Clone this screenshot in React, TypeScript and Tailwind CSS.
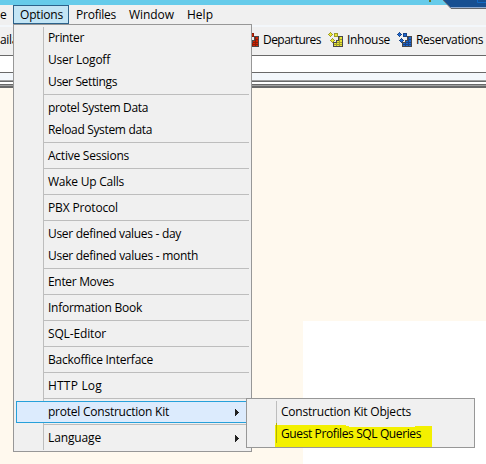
import { useLayoutEffect, useRef } from 'react';

type LabelProps = { text: string; width: number };

// Tightens or loosens the tracking so that a label takes its set width.
function Label({ text, width }: LabelProps) {
  const ref = useRef<HTMLSpanElement>(null);
  useLayoutEffect(() => {
    const el = ref.current;
    if (!el) return;
    el.style.letterSpacing = '0px';
    const natural = el.getBoundingClientRect().width;
    el.style.letterSpacing = `${(width + 1 - natural) / text.length}px`;
  }, [text, width]);
  return (
    <span ref={ref} className="inline-block whitespace-pre">
      {text}
    </span>
  );
}

type Entry = { text: string; width: number; sub?: boolean; active?: boolean };

const groups: Entry[][] = [
  [
    { text: 'Printer', width: 35 },
    { text: 'User Logoff', width: 61 },
    { text: 'User Settings', width: 68 },
  ],
  [
    { text: 'protel System Data', width: 99 },
    { text: 'Reload System data', width: 103 },
  ],
  [{ text: 'Active Sessions', width: 80 }],
  [{ text: 'Wake Up Calls', width: 75 }],
  [{ text: 'PBX Protocol', width: 69 }],
  [
    { text: 'User defined values - day', width: 132 },
    { text: 'User defined values - month', width: 149 },
  ],
  [{ text: 'Enter Moves', width: 65 }],
  [{ text: 'Information Book', width: 93 }],
  [{ text: 'SQL-Editor', width: 57 }],
  [{ text: 'Backoffice Interface', width: 104 }],
  [{ text: 'HTTP Log', width: 53 }],
  [{ text: 'protel Construction Kit', width: 120, sub: true, active: true }],
  [{ text: 'Language', width: 52, sub: true }],
];

function Row({ item }: { item: Entry }) {
  return (
    <div
      className={
        'relative mx-[2px] flex h-[22px] items-center justify-between border pl-[31px] pr-[9px] ' +
        (item.active ? 'border-[#26a0da] bg-[#dcebfd]' : 'border-transparent')
      }
    >
      <Label text={item.text} width={item.width} />
      {item.sub && (
        <svg width="4" height="7" viewBox="0 0 4 7" shapeRendering="crispEdges">
          <path d="M0 0h1v1h1v1h1v1h1v1h-1v1h-1v1h-1v1h-1z" fill="#212121" />
        </svg>
      )}
    </div>
  );
}

function Blocks({ color, shade }: { color: string; shade: string }) {
  return (
    <svg width="15" height="15" viewBox="0 0 15 15" shapeRendering="crispEdges" className="mt-[-1px] shrink-0">
      <path d="M2 0h1v1h1v1h1v1h-1v1h-1v1h-1v-1h-1v-1h-1v-1h1v-1h1zM4 6h1v1h1v1h1v1h-1v1h-1v1h-1v-1h-1v-1h-1v-1h1v-1h1zM6 1h4v4h-4z" fill={shade} />
      <path d="M10 4h5v11h-10v-5h3v-2h2z" fill="#49494b" />
      <path d="M11 5h3v9h-8v-3h3v-2h2z" fill={shade} />
      <path d="M2 1h1v1h1v1h-1v1h-1v-1h-1v-1h1zM4 7h1v1h1v1h-1v1h-1v-1h-1v-1h1zM7 2h2v2h-2zM12 5h2v2h-2zM9 9h2v1h-2zM12 8h2v2h-2zM6 11h2v1h-2zM9 11h2v1h-2zM12 11h2v1h-2zM6 13h2v1h-2zM9 13h2v1h-2zM12 13h2v1h-2z" fill={color} />
    </svg>
  );
}

export default function App() {
  return (
    <div className="relative h-[464px] w-[486px] overflow-hidden bg-[#fff9ee] font-['Open_Sans',sans-serif] text-[12px] leading-[18px] text-black">
      <div className="relative h-[5px] bg-[#66cbea]">
        <div className="absolute left-[429px] top-0 h-[2px] w-[2px] bg-[#65752e]" />
        <svg className="absolute left-[443px] top-0 z-10" width="43" height="9" viewBox="0 0 43 9">
          <path d="M0 0H43V8H8z" fill="#174f91" />
          <path d="M7.500 7.500H43" stroke="#8eaad0" />
          <path d="M0 0L8 8.500H43" fill="none" stroke="#66686c" />
          <path d="M34.500 0v2.500H43" fill="none" stroke="#126ac4" />
        </svg>
      </div>
      <nav className="flex h-[20px] items-start bg-[#f0f0f0]">
        <div className="w-[13px] overflow-hidden leading-[20px]">e</div>
        <div className="h-[19px] w-[56px] border border-[#2c628b] bg-[#c3e5f5] pl-[6px] leading-[18px]">
          <Label text="Options" width={42} />
        </div>
        <div className="w-[53px] pl-[7px] leading-[20px]"><Label text="Profiles" width={39} /></div>
        <div className="w-[58px] pl-[7px] leading-[20px]"><Label text="Window" width={44} /></div>
        <div className="pl-[7px] leading-[20px]"><Label text="Help" width={25} /></div>
      </nav>
      <div className="h-[2px] bg-[#f3f7fb]" />
      <div className="flex h-[28px] items-center bg-[#f0f0f0] pb-[2px]">
        <div className="w-[244px]"><Label text="aila" width={17} /></div>
        <Blocks color="#d32300" shade="#8c1c08" />
        <div className="w-[69px] pl-[4px]"><Label text="Departures" width={57} /></div>
        <Blocks color="#eae733" shade="#9c9a2c" />
        <div className="w-[54px] pl-[4px]"><Label text="Inhouse" width={42} /></div>
        <Blocks color="#1b67d0" shade="#1c4484" />
        <div className="pl-[4px]"><Label text="Reservations" width={66} /></div>
      </div>
      <div className="h-[18px] border-y border-[#696969] bg-white" />
      <div className="h-[7px] bg-[#f3f7fb]" />
      <div className="h-px bg-[#a0a0a0]" />
      <div className="h-px bg-[#696969]" />
      <div className="h-[2px] bg-white" />
      <div className="h-px bg-[#696969]" />
      <div className="h-px bg-[#a0a0a0]" />
      <div className="h-[2px] bg-[#696969]" />
      <div className="ml-[303px] mt-[233px] h-[143px] bg-white" />

      <div className="absolute left-[13px] top-[24px] h-[428px] w-[239px] border border-[#979797] bg-[#f0f0f0] pt-[2px]">
        <div className="absolute left-[29px] top-[2px] h-[423px] w-px bg-[#bdbdbd]" />
        {groups.map((g, i) => (
          <div key={i}>
            {i > 0 && (
              <div className="h-[4px] pl-[30px] pr-[2px] pt-px">
                <div className="h-px bg-[#bdbdbd]" />
              </div>
            )}
            {g.map((item) => (
              <Row key={item.text} item={item} />
            ))}
          </div>
        ))}
      </div>

      <div className="absolute left-[246px] top-[398px] h-[50px] w-[229px] border border-[#979797] bg-[#f0f0f0] pt-[2px]">
        <svg className="absolute left-[28px] top-[26px]" width="158" height="22" viewBox="0 0 158 22" shapeRendering="crispEdges">
          <path d="M0 0h71v1h3v1h66v-1h17v21h-9v1h-85v-1h-63z" fill="#f3f000" />
        </svg>
        <div className="absolute left-[29px] top-[2px] h-[22px] w-px bg-[#bdbdbd]" />
        <div className="absolute left-[29px] top-[24px] h-[20px] w-px bg-[#b5b300]" />
        <div className="relative flex h-[22px] items-center pl-[34px]"><Label text="Construction Kit Objects" width={129} /></div>
        <div className="relative flex h-[22px] items-center pl-[34px]"><Label text="Guest Profiles SQL Queries" width={139} /></div>
      </div>
    </div>
  );
}
